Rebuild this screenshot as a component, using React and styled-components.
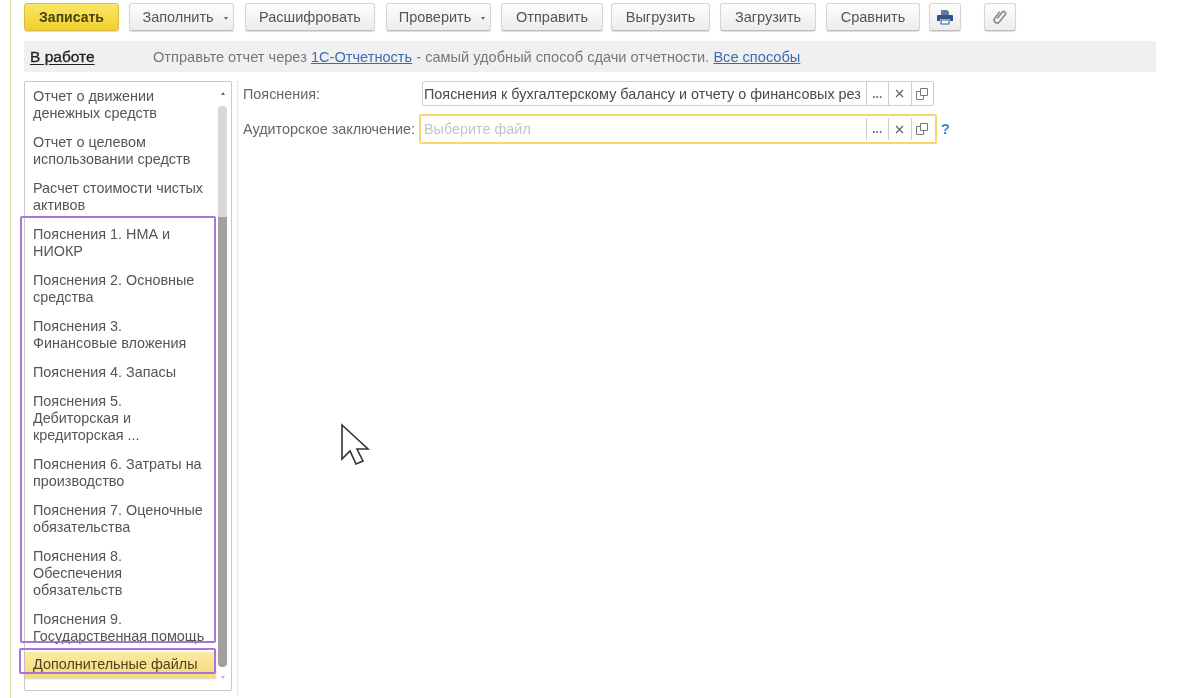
import React from "react";
import styled, { createGlobalStyle } from "styled-components";

const GlobalStyle = createGlobalStyle`
  html, body {
    margin: 0;
    padding: 0;
    background: #fff;
  }
  * {
    box-sizing: border-box;
  }
`;

const Page = styled.div`
  position: relative;
  width: 1200px;
  height: 698px;
  overflow: hidden;
  background: #fff;
  font-family: "Liberation Sans", Arial, sans-serif;
  font-size: 14.4px;
  color: #555;
  filter: blur(0.6px);
`;
const Frame = styled.div`
  margin-left: 10px;
  width: 1146px;
  height: 698px;
  padding: 3px 0 0 13px;
  border-left: 1px solid #e9dfa8;
`;
const Toolbar = styled.div`
  display: flex;
  height: 28px;
`;
const Button = styled.div`
  display: flex;
  justify-content: center;
  align-items: center;
  gap: 10px;
  flex: none;
  width: ${(props) => props.$w}px;
  margin-right: ${(props) => props.$gap ?? 10}px;
  padding-left: ${(props) => (props.$caret ? 7 : 0)}px;
  height: 28px;
  border: 1px solid #d6d6d6;
  border-bottom-color: #bdbdbd;
  border-radius: 3px;
  font-size: 14.5px;
  color: #555;
  background: linear-gradient(#fdfdfd, #ececec);
  box-shadow: 0 1px 1px rgba(0, 0, 0, 0.15);
`;
const PrimaryButton = styled(Button)`
  font-size: 14px;
  font-weight: bold;
  color: #4c4210;
  border-color: #d9bd3c;
  background: linear-gradient(#fbe766, #f1cf2f);
`;
const Caret = styled.span`
  width: 0;
  height: 0;
  margin-top: 2px;
  border-left: 2px solid transparent;
  border-right: 2px solid transparent;
  border-top: 3px solid #666;
`;
const InfoBar = styled.div`
  display: flex;
  align-items: center;
  height: 31px;
  margin-top: 10px;
  padding-left: 6px;
  background: #f0f0f0;
  font-size: 14.6px;
  color: #777;
`;
const Status = styled.span`
  width: 123px;
  font-size: 15.5px;
  color: #222;
  -webkit-text-stroke: 0.3px #222;
  text-decoration: underline;
  text-underline-offset: 2px;
`;
const Link = styled.a`
  color: #3a6bb5;
  text-decoration: underline;
`;
const Body = styled.div`
  display: flex;
  margin-top: 9px;
`;
const List = styled.div`
  display: flex;
  flex: none;
  width: 208px;
  height: 610px;
  border: 1px solid #c9c9c9;
  border-radius: 2px;
`;
const Items = styled.div`
  position: relative;
  width: 191px;
`;
const Item = styled.div`
  padding: 6px 0 6px 8px;
  line-height: 17px;
  white-space: nowrap;
  color: #555;
  ${(props) =>
    props.$active &&
    `
    margin-top: 1px;
    padding: 4px 0 5px 8px;
    background: linear-gradient(#fbeaa6, #f6da78);
    box-shadow: 0 1px 2px rgba(120, 100, 20, 0.3);
    color: #4d4520;
  `}
`;
const Line = styled.div``;
const Highlight = styled.div`
  position: absolute;
  left: ${(props) => props.$left}px;
  top: ${(props) => props.$top}px;
  right: 0;
  height: ${(props) => props.$h}px;
  border: 2px solid #a774d8;
  border-radius: 2px;
`;
const Scroll = styled.div`
  width: 9px;
  margin-left: 2px;
  display: flex;
  flex-direction: column;
  align-items: center;
`;
const Arrow = styled.span`
  width: 0;
  height: 0;
  border-left: 2px solid transparent;
  border-right: 2px solid transparent;
  ${(props) => (props.$down ? "border-top: 3px solid #bbb;" : "border-bottom: 3px solid #666;")}
  margin: ${(props) => props.$margin};
`;
const ThumbTop = styled.div`
  flex: none;
  width: 9px;
  height: 111px;
  border-radius: 4px 4px 0 0;
  background: #d8d8d8;
`;
const Thumb = styled.div`
  flex: none;
  width: 9px;
  height: 450px;
  border-radius: 0 0 4px 4px;
  background: #a0a0a0;
`;
const Divider = styled.div`
  flex: none;
  width: 1px;
  height: 614px;
  margin: 0 0 0 5px;
  border-left: 1px dotted #d2d2d2;
`;
const Form = styled.div`
  padding-left: 5px;
`;
const Row = styled.div`
  display: flex;
  align-items: center;
  height: ${(props) => props.$h}px;
  margin-bottom: 8px;
`;
const Label = styled.div`
  flex: none;
  width: ${(props) => props.$w}px;
  white-space: nowrap;
  color: #666;
`;
const Field = styled.div`
  display: flex;
  align-items: stretch;
  width: ${(props) => props.$w}px;
  height: ${(props) => props.$h}px;
  border: ${(props) => (props.$focus ? "2px solid #f5d76b" : "1px solid #cfcfcf")};
  border-radius: 2px;
  ${(props) => props.$focus && "padding: 2px 2px 2px 0;"}
`;
const Value = styled.div`
  flex: 1;
  min-width: 0;
  align-self: center;
  padding-left: ${(props) => (props.$focus ? 3 : 1)}px;
  overflow: hidden;
  white-space: nowrap;
  color: ${(props) => (props.$empty ? "#c4c4c4" : "#4a4a4a")};
`;
const FieldButton = styled.div`
  display: flex;
  flex: none;
  justify-content: center;
  align-items: center;
  width: 22.5px;
  border-left: 1px solid #cfcfcf;
  color: #777;
  font-size: 12px;
  font-weight: bold;
`;
const Help = styled.span`
  margin-left: 4px;
  color: #3b86c6;
  font-weight: bold;
`;
const Cursor = styled.svg`
  position: absolute;
  left: 340px;
  top: 423px;
`;

const PrintIcon = () => (
  <svg width="18" height="16" viewBox="0 0 18 16">
    <path d="M5 1h6l2 2v3H5z" fill="#5b7ea6" />
    <path d="M2 6h14a1 1 0 0 1 1 1v5h-3v-2H4v2H1V7a1 1 0 0 1 1-1z" fill="#2f5784" />
    <rect x="5" y="11" width="8" height="4" fill="#fff" stroke="#2f5784" />
  </svg>
);

const ClipIcon = () => (
  <svg width="16" height="16" viewBox="0 0 16 16" fill="none" stroke="#8a8a8a" strokeWidth="1.6">
    <path d="M5.2 9.6 10.4 3a1.9 1.9 0 0 1 3 2.3l-6.3 8a3 3 0 0 1-4.6-3.7l5.2-6.8" />
  </svg>
);

const ClearIcon = () => (
  <svg width="9" height="9" viewBox="0 0 9 9" stroke="#666" strokeWidth="1.3">
    <path d="M1 1l7 7M8 1L1 8" />
  </svg>
);

const CopyIcon = () => (
  <svg width="12" height="12" viewBox="0 0 12 12" fill="none" stroke="#777">
    <path d="M4.5 7.5v-7h7v7z" />
    <path d="M4.5 3.5h-4v8h7v-4" />
  </svg>
);

const buttons = [
  { text: "Заполнить", w: 105, caret: true, gap: 11 },
  { text: "Расшифровать", w: 130, gap: 11 },
  { text: "Проверить", w: 105, caret: true, gap: 10 },
  { text: "Отправить", w: 102, gap: 8 },
  { text: "Выгрузить", w: 99 },
  { text: "Загрузить", w: 96 },
  { text: "Сравнить", w: 94, gap: 9 },
];

const items = [
  ["Отчет о движении", "денежных средств"],
  ["Отчет о целевом", "использовании средств"],
  ["Расчет стоимости чистых", "активов"],
  ["Пояснения 1. НМА и", "НИОКР"],
  ["Пояснения 2. Основные", "средства"],
  ["Пояснения 3.", "Финансовые вложения"],
  ["Пояснения 4. Запасы"],
  ["Пояснения 5.", "Дебиторская и", "кредиторская ..."],
  ["Пояснения 6. Затраты на", "производство"],
  ["Пояснения 7. Оценочные", "обязательства"],
  ["Пояснения 8.", "Обеспечения", "обязательств"],
  ["Пояснения 9.", "Государственная помощь"],
];

const FieldActions = () => (
  <>
    <FieldButton>...</FieldButton>
    <FieldButton>
      <ClearIcon />
    </FieldButton>
    <FieldButton>
      <CopyIcon />
    </FieldButton>
  </>
);

const App = () => (
  <Page>
    <GlobalStyle />
    <Frame>
      <Toolbar>
        <PrimaryButton $w={95}>Записать</PrimaryButton>
        {buttons.map((b) => (
          <Button key={b.text} $w={b.w} $gap={b.gap} $caret={b.caret}>
            {b.text}
            {b.caret && <Caret />}
          </Button>
        ))}
        <Button $w={32} $gap={23}>
          <PrintIcon />
        </Button>
        <Button $w={32}>
          <ClipIcon />
        </Button>
      </Toolbar>
      <InfoBar>
        <Status>В работе</Status>
        <span>
          Отправьте отчет через <Link>1С-Отчетность</Link> - самый удобный способ сдачи отчетности.{" "}
          <Link>Все способы</Link>
        </span>
      </InfoBar>
      <Body>
        <List>
          <Items>
            {items.map((lines) => (
              <Item key={lines[0]}>
                {lines.map((line) => (
                  <Line key={line}>{line}</Line>
                ))}
              </Item>
            ))}
            <Item $active>Дополнительные файлы</Item>
            <Highlight $left={-5} $top={134} $h={427} />
            <Highlight $left={-6} $top={566} $h={26} />
          </Items>
          <Scroll>
            <Arrow $margin="10px 0 11px" />
            <ThumbTop />
            <Thumb />
            <Arrow $down $margin="9px 0 0" />
          </Scroll>
        </List>
        <Divider />
        <Form>
          <Row $h={25}>
            <Label $w={179}>Пояснения:</Label>
            <Field $w={512} $h={25}>
              <Value>Пояснения к бухгалтерскому балансу и отчету о финансовых рез</Value>
              <FieldActions />
            </Field>
          </Row>
          <Row $h={30}>
            <Label $w={176}>Аудиторское заключение:</Label>
            <Field $w={518} $h={30} $focus>
              <Value $empty $focus>
                Выберите файл
              </Value>
              <FieldActions />
            </Field>
            <Help>?</Help>
          </Row>
        </Form>
      </Body>
    </Frame>
    <Cursor width="30" height="44" viewBox="0 0 30 44">
      <path d="M2 2v34l8-8 6 13 7-3-6-12h11z" fill="#fff" stroke="#333" strokeWidth="1.6" />
    </Cursor>
  </Page>
);

export default App;
